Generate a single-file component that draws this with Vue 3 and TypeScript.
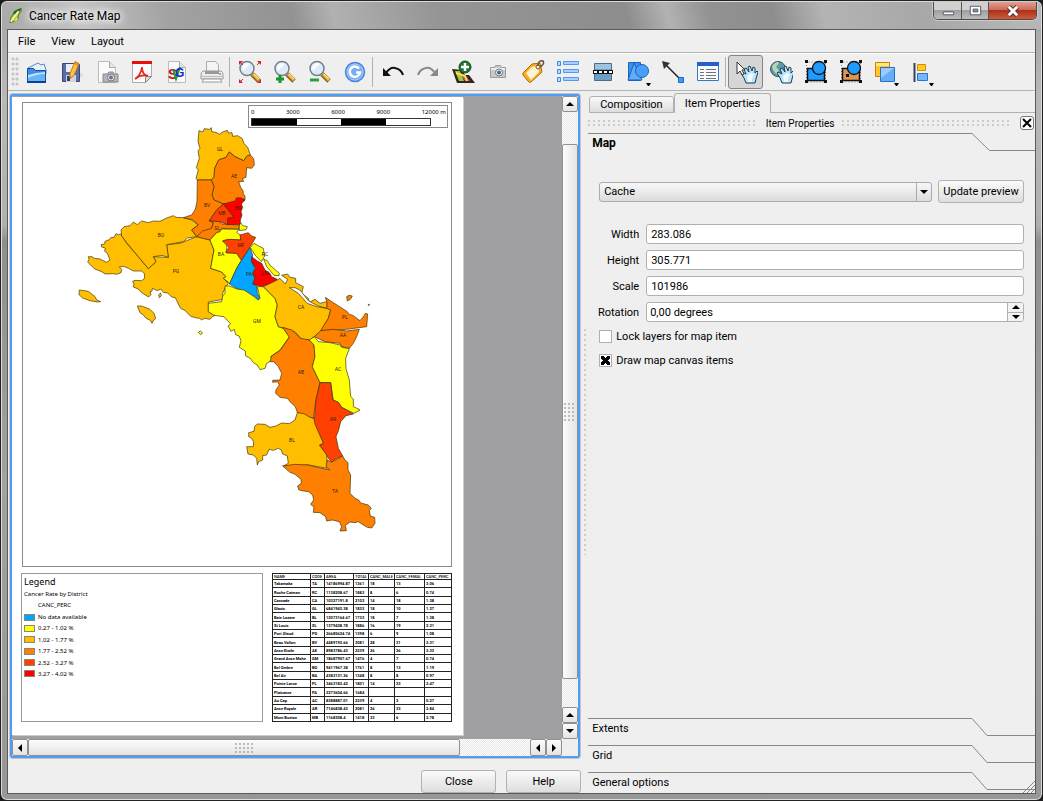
<script setup lang="ts">
import { ref } from 'vue'

interface Tool { name: string; art: string; pressed?: boolean; menu?: boolean }
interface Region { d: string; c: string }
interface Group { at: string; regions: Region[] }

const amber = '#ffbf00'
const orange = '#ff8000'
const ember = '#ff4000'
const red = '#ff0000'
const yellow = '#ffff00'
const blue = '#00a5ff'

const lens = '<path d="M14 14l7 7" stroke="#8a6a2a" stroke-width="5"/><path d="M15 14l6 6" stroke="#f5b73c" stroke-width="3"/><path d="M16 14l5 5" stroke="#ffe9a8"/><circle cx="9" cy="8.500" r="7" fill="#dcebf8" stroke="#75808c" stroke-width="1.500"/><path d="M4 8a5 5 0 0 1 8-4L5 11z" fill="#fff" opacity=".8"/>'
const hand = '<path d="M9 22l-2-5-3-5 1-1 4 2-2-5 2-1 3 4-1-5 2-1 2 5 1-4 2 1v5l2-2 1 1-2 7-1 4z" fill="#b9e3f8" stroke="#1f3d52"/><path d="M11 21l-1-6 4-3 3 1-2 5v3z" fill="#ecf9ff"/>'
const corners = '<path d="M2.500 2v20h19V2z" fill="none" stroke="#777" stroke-dasharray="1 2"/><path d="M1 0h3v3H1zM20 0h3v3h-3zM1 20h3v3H1zM20 20h3v3h-3z" fill="#111"/>'
const cam = '<path d="M4.500 7.500h4l1-2h5l1 2h4v10h-15z" fill="#c9c9c9" stroke="#9d9d9d"/><path d="M5 8h14v2H5z" fill="#eee"/><circle cx="13" cy="12.500" r="3.500" fill="#eef3fa" stroke="#777"/><circle cx="13" cy="12.500" r="2" fill="#46629a"/>'
const sheet = '<path d="M3.500 1.500h11l6 6v15h-17z" fill="#fafafa" stroke="#bbb"/><path d="M14.500 1.500v6h6" fill="#e4e4e4" stroke="#aaa"/>'

const toolGroups: Tool[][] = [
  [
    { name: 'Open template', art: '<path d="M3 8l10-5 3 2 3-1 2 6v4H3z" fill="#e8f2fd" stroke="#5885c0"/><path d="M2.500 8.500h6l2 2h10v12h-18z" fill="#3f8de0" stroke="#174da5"/><path d="M3 20v-5l8-2 9-1v9z" fill="#b7e1ff"/><path d="M3 18q9-4 17-4v7H3z" fill="#68b4f4"/><path d="M2 21h19v2H2z" fill="#0d3e9c"/>' },
    { name: 'Save template', art: '<path d="M18 11l6 4-6 4z" fill="#ddd"/><path d="M2.500 3.500h16l1 1v17h-17z" fill="#5b6ea8" stroke="#39477a"/><path d="M6 4h10v8H6z" fill="#e9edf5"/><path d="M6 15h10v7H6z" fill="#cfd3de"/><path d="M7 16h3v5H7z" fill="#30406f"/><path d="M15 1.500l4 2-5 12-4 3v-5z" fill="#ffc23d" stroke="#c37a10"/><path d="M15 2l4 2-1 2-4-2z" fill="#ed8b28"/>' },
    { name: 'Export as image', art: sheet + '<path d="M8 14h4l2-2h4l1 2h4v8H8z" fill="#b5b5b5" stroke="#898989"/><circle cx="16" cy="17.500" r="3.500" fill="#e2e6ee" stroke="#777"/><circle cx="16" cy="17.500" r="2" fill="#66758f"/>' },
    { name: 'Export as PDF', art: '<path d="M2.500 1.500h19v15l-6 6h-13z" fill="#fbfbfb" stroke="#aaa"/><path d="M2 1h20v3H2z" fill="#e80f0f"/><path d="M15.500 22.500v-6h6z" fill="#ddd" stroke="#888"/><path d="M5 19q6-4 7-12 0 8 6 9-7-2-13 3" fill="none" stroke="#e22b20" stroke-width="1.800"/>' },
    { name: 'Export as SVG', art: sheet + '<text x="3" y="19" font-size="14" font-weight="bold" fill="#e00016" font-family="Liberation Sans">S</text><path d="M8 9l3 10 4-12" stroke="#00b02a" stroke-width="2" fill="none"/><text x="10" y="17" font-size="12" font-weight="bold" fill="#1720d8" font-family="Liberation Sans">G</text>' },
    { name: 'Print', art: '<path d="M6.500 13V1.500h9l3 3V13z" fill="#f4f4f4" stroke="#aaa"/><path d="M3 11h18q2 1 2 4v4H1v-4q0-3 2-4z" fill="#ececec" stroke="#999"/><path d="M5 11h14v3H5z" fill="#999"/><path d="M2 16h20v1H2z" fill="#bbb"/><path d="M4 19h16l2 3H2z" fill="#fff" stroke="#999"/><circle cx="20" cy="14" r="1" fill="#5b5"/>' },
  ],
  [
    { name: 'Zoom full', art: lens + '<path d="M1 5V1h4zM23 5V1h-4zM1 19v4h4zM23 19v4h-4z" fill="#d8202c"/><path d="M1 1l4 4M23 1l-4 4M1 23l4-4" stroke="#d8202c"/>' },
    { name: 'Zoom in', art: lens + '<path d="M7 15v8M3 19h8" stroke="#1f9434" stroke-width="3"/>' },
    { name: 'Zoom out', art: lens + '<path d="M2 20h9" stroke="#2d9f3f" stroke-width="3"/>' },
    { name: 'Refresh view', art: '<circle cx="12" cy="12" r="9.500" fill="#79adf2" stroke="#4b84da" stroke-width="1.500"/><circle cx="12" cy="12" r="8" fill="none" stroke="#a9ccfa"/><path d="M16 8.500a5.200 5.200 0 1 0 1 4h-4" fill="none" stroke="#fff" stroke-width="2.500"/>' },
  ],
  [
    { name: 'Undo', art: '<path d="M5 13q4-6 9-5 6 1 8 7" fill="none" stroke="#111" stroke-width="2"/><path d="M2 8v8h8z" fill="#111"/>' },
    { name: 'Redo', art: '<path d="M19 13q-4-6-9-5-6 1-8 7" fill="none" stroke="#888" stroke-width="2"/><path d="M22 8v8h-8z" fill="#888"/>' },
    { name: 'Add new map', art: '<path d="M1 9l10 1 3 5 4 0 6 8H6z" fill="#33241c"/><path d="M4 11h5l4 10H8z" fill="#9dcb3c"/><path d="M8 12l6 9h5l-4-5z" fill="#d84a83"/><path d="M5 13l9 3 2 5" fill="none" stroke="#f4e548" stroke-width="2"/><circle cx="14" cy="7" r="6" fill="#1e7430" stroke="#145020"/><path d="M14 3v8M10 7h8" stroke="#fff" stroke-width="2.500"/>' },
    { name: 'Add image', art: cam },
    { name: 'Add label', art: '<path d="M11 4l8-1 2 9-11 10q-2 1-3-1l-5-6q-1-2 1-3z" fill="#ffae15" stroke="#ad6808"/><path d="M11 7l6-1 1 6-8 8-5-7z" fill="#fff4d7"/><circle cx="17" cy="7" r="2" fill="#eee" stroke="#79551f"/><path d="M17 6q0-6 5-5 2 3-3 6" fill="none" stroke="#63513d" stroke-width="1.500"/>' },
    { name: 'Add legend', art: '<path d="M1.500 1.500h3v4h-3zM1.500 9.500h3v4h-3zM1.500 17.500h3v4h-3z" fill="#bddcff" stroke="#3d85df"/><path d="M7.500 1.500h15v3h-15zM7.500 9.500h15v3h-15zM7.500 17.500h15v3h-15z" fill="#a8ceff" stroke="#5598eb"/>' },
    { name: 'Add scalebar', art: '<path d="M3.500 3.500h17v17h-17z" fill="#6b9fc6" stroke="#426e92"/><path d="M4 4h16v5H4z" fill="#9dc3df"/><path d="M2 10h20v4H2z" fill="#111"/><path d="M3 12h18" stroke="#fff" stroke-width="2" stroke-dasharray="3 2"/>' },
    { name: 'Add basic shape', menu: true, art: '<path d="M2.500 2.500h12v18h-12z" fill="#3990ed" stroke="#1765bf"/><path d="M8 3L2 20h14z" fill="#63adf7" stroke="#1765bf"/><circle cx="16" cy="11" r="6.500" fill="#49a0fa" stroke="#1765bf"/>' },
    { name: 'Add arrow', art: '<path d="M4 4l15 15" stroke="#222" stroke-width="1.500"/><path d="M1 1l8 2-6 6z" fill="#333"/><path d="M17.500 17.500h5v5h-5z" fill="#3b9cff" stroke="#1d69be"/>' },
    { name: 'Add attribute table', art: '<path d="M1.500 2.500h21v18h-21z" fill="#f8fbff" stroke="#3477cd"/><path d="M1 2h22v4H1z" fill="#2361c8"/><path d="M4 9.500h4M4 12.500h4M4 15.500h4M4 18.500h4M10 9.500h10M10 12.500h10M10 15.500h10M10 18.500h10" stroke="#6d737c"/>' },
  ],
  [
    { name: 'Select/Move item', pressed: true, art: '<g transform="translate(3 1)">' + hand + '</g><path d="M3 2v12l3-3 2 4 2-1-2-4h3z" fill="#fff" stroke="#333"/>' },
    { name: 'Move item content', art: '<circle cx="9" cy="9" r="7.500" fill="#5d99af" stroke="#38515c"/><path d="M3 6q5-6 7-3l-3 4 3 3-2 5-4-5z" fill="#b9d7ae"/><g transform="translate(4 1)">' + hand + '</g>' },
    { name: 'Group items', art: corners + '<path d="M3.500 8.500h17v12h-17z" fill="#1e9bff" stroke="#111" stroke-width="1.500"/><circle cx="15" cy="8" r="6.500" fill="#1e9bff" stroke="#111" stroke-width="1.300"/>' },
    { name: 'Ungroup items', art: corners + '<path d="M3.500 8.500h17v12h-17z" fill="#df9654" stroke="#111" stroke-width="1.500"/><circle cx="15" cy="8" r="6.500" fill="#1e9bff" stroke="#111" stroke-width="1.300"/><path d="M7 14h3v3H7z" fill="#111"/>' },
    { name: 'Raise selected items', menu: true, art: '<path d="M1.500 2.500h14v14h-14z" fill="#ffc52d" stroke="#cd8000"/><path d="M2 3h13v3H2z" fill="#ffe77b"/><path d="M6.500 7.500h14v14h-14z" fill="#66acf8" stroke="#2670c8"/><path d="M7 8h13L7 18z" fill="#9bcaff"/>' },
    { name: 'Align selected items', menu: true, art: '<path d="M5.500 3v19" stroke="#37405c" stroke-width="2"/><path d="M8.500 4.500h8v6h-8z" fill="#ffcb28" stroke="#dc8a00"/><path d="M8.500 13.500h10v7h-10z" fill="#76b6fc" stroke="#2476d3"/>' },
  ],
]

const groups: Group[] = [
  {
    at: 'translate(70 100) scale(.33333)',
    regions: [
      { c: amber, d: 'M153 402L146 404 138 401 132 412 122 413 118 419 105 424 104 432 93 434 95 441 106 444 104 454 112 460 120 480 110 487 90 477 73 475 66 470 55 470 57 478 53 486 62 495 74 507 95 515 105 522 130 521 140 523 153 518 155 508 148 501 160 499 176 505 190 513 215 513 223 521 224 535 215 542 195 541 188 544 192 552 190 561 204 567 218 580 236 591 243 584 240 575 246 573 247 565 262 572 272 567 280 577 293 579 305 591 316 593 325 612 332 625 346 632 362 649 380 654 389 655 395 660 404 655 420 658 427 650 435 646 415 635 415 606 460 598 458 580 465 565 475 550 460 535 468 530 455 516 422 505 432 450 420 420 380 410 330 430 290 434 295 472 250 470 258 485 235 506 205 470 170 430z' },
      { c: amber, d: 'M153 390L162 380 180 377 190 366 202 374 215 363 235 368 250 363 270 364 290 354 310 347 318 352 340 353 365 360 385 375 365 390 380 410 352 414 340 425 290 434 295 472 276 466 250 470 258 485 235 506 205 470 170 428 155 408z' },
      { c: amber, d: 'M387 92L398 96 403 86 418 88 424 83 425 95 438 97 448 103 458 96 472 91 475 99 486 98 488 109 503 107 516 115 522 130 533 142 541 165 530 170 521 182 495 170 478 156 468 172 446 180 434 205 432 232 424 240 382 240 378 235 385 210 379 203 388 175 384 153 390 145 384 125z' },
      { c: orange, d: 'M478 156L495 170 521 182 532 167 541 165 551 176 553 195 545 205 530 203 528 232 517 236 521 244 506 245 512 262 519 272 520 282 525 288 525 300 512 294 495 307 460 312 443 304 432 300 426 285 432 260 424 240 432 232 434 205 446 180 468 172z' },
      { c: orange, d: 'M382 240L424 240 432 260 426 285 432 300 460 312 440 330 418 362 430 368 425 385 410 395 380 410 365 390 385 375 370 360 340 353 365 345 376 328 381 305z' },
      { c: orange, d: 'M418 362L450 365 455 372 508 375 507 388 455 385 450 395 440 398 420 420 380 410 398 393 425 385 430 368z' },
      { c: yellow, d: 'M420 420L440 398 450 395 455 387 507 388 500 397 512 406 512 420 470 418 458 423 472 430 468 458 500 460 515 480 500 505 480 550 460 535 468 530 455 516 422 505 432 450z' },
      { c: yellow, d: 'M511 366L518 377 532 380 528 389 508 392 508 375z' },
      { c: ember, d: 'M460 312L492 352 474 354 472 374 450 365 418 362 440 330z' },
      { c: red, d: 'M460 312L495 303 500 293 512 294 525 300 514 312 518 322 513 335 516 345 511 360 510 373 472 374 474 354 492 352z' },
      { c: ember, d: 'M458 423L480 418 512 420 510 405 535 398 545 408 557 412 550 425 540 440 528 460 515 482 500 460 468 458 476 442z' },
      { c: blue, d: 'M540 443L548 465 545 485 555 505 548 520 555 535 548 550 560 558 562 580 572 598 562 600 555 588 542 590 530 582 478 552 500 505 515 480z' },
      { c: red, d: 'M545 470L562 483 575 490 585 510 600 520 605 530 622 538 605 550 575 560 548 552 555 535 548 520 557 505 545 485z' },
      { c: yellow, d: 'M541 442L552 430 566 438 580 445 584 468 574 485 555 465z' },
      { c: yellow, d: 'M581 477L592 482 600 496 612 506 628 520 627 527 612 526 590 500z' },
      { c: amber, d: 'M28 570L55 574 75 590 80 600 92 605 82 606 60 602 38 594 27 584z' },
      { c: amber, d: 'M202 618L215 618 240 628 252 640 257 656 251 660 246 670 240 660 228 655 220 645 210 638z' },
      { c: amber, d: 'M266 584L272 579 274 587 268 593z' },
      { c: yellow, d: 'M385 697L391 693 398 699 391 704z' },
    ],
  },
  {
    at: 'translate(200 190) scale(.33333)',
    regions: [
      { c: yellow, d: 'M88 288L110 297 132 300 155 315 175 330 180 325 172 290 190 290 225 325 232 345 225 380 235 410 250 415 268 440 240 480 212 500 218 510 200 520 195 535 180 539 172 525 160 518 150 504 137 498 136 483 118 472 123 452 117 438 107 434 103 418 93 424 84 408 92 402 72 380 42 376 25 365 25 340 65 335 68 318 75 310 75 288z' },
      { c: amber, d: 'M190 290L232 270 240 265 256 282 263 268 245 256 263 252 270 262 287 265 287 278 310 290 305 310 325 325 328 337 345 328 360 340 380 335 382 355 392 360 385 385 362 425 330 450 305 448 285 425 235 410 225 380 232 345 225 325z' },
      { c: '#fff', d: 'M268 293L285 293 300 300 325 332 352 347 380 355 350 350 322 340 295 310z' },
      { c: orange, d: 'M376 322L400 338 442 365 446 372 460 377 480 392 492 378 496 370 503 372 500 410 440 418 362 422 385 385 392 360 380 355 382 340z' },
      { c: orange, d: 'M362 422L400 418 440 423 478 418 470 440 460 460 448 475 425 470 420 460 375 455 343 440z' },
      { c: orange, d: 'M440 320L447 316 457 318 451 328 442 333z' },
      { c: orange, d: 'M505 343h3v3h-3z' },
    ],
  },
  {
    at: 'translate(230 320) scale(.33333)',
    regions: [
      { c: orange, d: 'M158 22L185 30 212 55 238 60 252 75 255 110 247 140 270 188 258 240 250 295 240 292 202 278 196 260 180 245 172 235 150 232 137 220 138 209 148 195 143 185 128 187 128 181 150 180 155 160 145 140 131 125 120 125 125 108 150 92 178 52z' },
      { c: yellow, d: 'M238 60L253 50 265 65 300 68 330 75 335 82 358 86 347 115 348 146 358 180 362 230 370 237 370 260 381 265 390 270 372 280 335 262 325 247 310 240 302 188 270 188 247 140 255 110 252 75z' },
      { c: ember, d: 'M270 188L302 188 308 240 325 247 335 262 370 282 348 287 332 305 326 330 318 350 325 385 338 408 320 415 305 427 288 405 268 375 280 372 270 345 252 310 258 240z' },
      { c: amber, d: 'M202 278L222 281 240 292 252 296 255 312 280 370 268 375 290 405 292 445 235 435 160 438 175 430 172 408 158 402 154 390 145 385 130 391 117 388 110 405 98 407 98 420 86 425 82 435 80 415 70 405 54 402 50 380 70 380 71 366 65 355 56 350 56 338 72 334 74 319 82 312 105 313 120 322 138 318 155 309 178 311 195 300z' },
      { c: orange, d: 'M158 438L195 433 235 435 262 442 300 450 288 440 292 420 305 427 338 408 345 420 354 428 354 450 362 465 360 520 375 535 386 540 392 549 415 555 424 565 418 571 421 588 434 592 435 610 425 624 412 622 400 615 385 605 375 608 360 606 346 616 349 632 330 633 335 620 328 605 307 600 290 603 287 590 270 578 250 577 252 561 242 553 251 540 248 525 236 515 215 512 206 509 203 498 214 490 213 478 195 463 180 457z' },
    ],
  },
]

const mapLabels: [string, number, number][] = [
  ['GL', 220, 151], ['AE', 234, 178], ['BV', 207, 207], ['ER', 238, 210], ['MB', 222, 215], ['SL', 217, 230],
  ['BO', 161, 237], ['MF', 241, 247], ['BA', 221, 256], ['RC', 265, 256], ['PA', 249, 276], ['LM', 265, 275],
  ['PG', 176, 273], ['CA', 301, 309], ['GM', 257, 323], ['PL', 345, 319], ['AA', 343, 337], ['AC', 338, 371],
  ['AB', 301, 374], ['AR', 333, 421], ['BL', 292, 442], ['TA', 335, 493],
]

const ticks = ['0', '3000', '6000', '9000', '12000 m']

const legend = [
  { c: blue, t: 'No data available' },
  { c: yellow, t: '0.27 - 1.02 %' },
  { c: amber, t: '1.02 - 1.77 %' },
  { c: orange, t: '1.77 - 2.52 %' },
  { c: ember, t: '2.52 - 3.27 %' },
  { c: red, t: '3.27 - 4.02 %' },
]

const columns = ['NAME', 'CODE', 'AREA', 'TOTAL', 'CANC_MALE', 'CANC_FEMAL', 'CANC_PERC']
const rows = [
  ['Takamaka', 'TA', '14186994.87', '1361', '18', '13', '3.06'],
  ['Roche Caiman', 'RC', '1138208.67', '1883', '8', '6', '0.74'],
  ['Cascade', 'CA', '10327191.8', '2103', '14', '18', '1.38'],
  ['Glacis', 'GL', '6841943.38', '1833', '18', '10', '1.37'],
  ['Baie Lazare', 'BL', '12073164.67', '1733', '18', '7', '1.38'],
  ['St Louis', 'SL', '1379428.78', '1886', '16', '19', '2.31'],
  ['Port Glaud', 'PG', '26685624.74', '1398', '6', '9', '1.08'],
  ['Beau Vallon', 'BV', '4489193.66', '3081', '28', '31', '2.31'],
  ['Anse Etoile', 'AE', '8983786.43', '2239', '26', '26', '2.33'],
  ['Grand Anse Mahe', 'GM', '18687907.67', '1476', '4', '7', '0.74'],
  ['Bel Ombre', 'BO', '9411967.38', '1761', '8', '13', '1.19'],
  ['Bel Air', 'BA', '4383131.26', '1348', '8', '8', '0.97'],
  ['Pointe Larue', 'PL', '3463183.42', '1801', '14', '23', '2.47'],
  ['Plaisance', 'PA', '2273604.66', '1684', '', '', ''],
  ['Au Cap', 'AC', '8388887.01', '2239', '4', '2', '0.27'],
  ['Anse Royale', 'AR', '7146838.43', '2081', '26', '33', '2.84'],
  ['Mont Buxton', 'MB', '1168308.4', '1418', '33', '6', '2.78'],
]

const cache = ref('Cache')
const fields = ref([
  { id: 'w', label: 'Width', value: '283.086' },
  { id: 'h', label: 'Height', value: '305.771' },
  { id: 's', label: 'Scale', value: '101986' },
])
const rotation = ref('0,00 degrees')
const lockLayers = ref(false)
const drawItems = ref(true)
</script>

<template>
  <div class="window">
    <header class="titlebar">
      <svg class="app" viewBox="0 0 16 18"><path d="M1 17Q2 5 14 1q1 3-3 7l-1 6-5 2z" fill="#b5c92c" stroke="#4d6f16" /><path d="M5 5q4-4 9-4l-2 4-7 3z" fill="#236c1c" /><path d="M2 16L11 4" stroke="#f4f6b6" stroke-width="2" /><path d="M6 16l3-5 1 3" fill="#eee29a" /></svg>
      <h1>Cancer Rate Map</h1>
      <div class="caption">
        <button class="min" aria-label="Minimize"><svg viewBox="0 0 28 18"><path d="M9.500 10.500h11v3h-11z" fill="#fff" stroke="#535666" /></svg></button>
        <button class="max" aria-label="Maximize"><svg viewBox="0 0 27 18"><path d="M8.500 4.500h11v9h-11z" fill="#fff" stroke="#535666" /><path d="M11.500 7.500h5v3h-5z" fill="#999" stroke="#535666" /></svg></button>
        <button class="shut" aria-label="Close window"><svg viewBox="0 0 46 18"><path d="M19 5l9 9M28 5l-9 9" stroke="#573030" stroke-width="5" /><path d="M19 5l9 9M28 5l-9 9" stroke="#fff" stroke-width="3" /></svg></button>
      </div>
    </header>

    <div class="client">
      <nav class="menubar">
        <button>File</button><button>View</button><button>Layout</button>
      </nav>

      <div class="toolbar" role="toolbar">
        <span class="grip" />
        <template v-for="(g, gi) in toolGroups" :key="gi">
          <span v-if="gi" class="sep" />
          <button v-for="t in g" :key="t.name" class="tool" :class="{ pressed: t.pressed }" :aria-label="t.name">
            <svg viewBox="0 0 24 24" fill="none" v-html="t.art" />
            <svg v-if="t.menu" class="drop" viewBox="0 0 5 3"><path d="M0 0h5L3 3H2z" fill="#000" /></svg>
          </button>
        </template>
      </div>

      <main class="body">
        <section class="left">
          <div class="view">
            <div class="stage">
              <div class="paper">
                <div class="mapframe">
                  <svg viewBox="23 103 428 463" class="map">
                    <g v-for="g in groups" :key="g.at" :transform="g.at" stroke="#3d3000" stroke-width="2" stroke-linejoin="round">
                      <path v-for="(r, i) in g.regions" :key="i" :d="r.d" :fill="r.c" />
                    </g>
                    <text v-for="l in mapLabels" :key="l[0]" :x="l[1]" :y="l[2]" text-anchor="middle">{{ l[0] }}</text>
                  </svg>
                  <div class="scalebar">
                    <div class="ticks"><span v-for="t in ticks" :key="t">{{ t }}</span></div>
                    <div class="bar"><i /><b /><i /><b /></div>
                  </div>
                </div>
                <div class="lower">
                  <div class="legend">
                    <h2>Legend</h2>
                    <p>Cancer Rate by District</p>
                    <p class="sub">CANC_PERC</p>
                    <ul>
                      <li v-for="l in legend" :key="l.t"><span class="swatch" :style="{ background: l.c }" />{{ l.t }}</li>
                    </ul>
                  </div>
                  <table class="attrs">
                    <colgroup><col class="c1"><col class="c2"><col class="c3"><col class="c4"><col class="c5"><col class="c6"><col class="c7"></colgroup>
                    <thead><tr><th v-for="c in columns" :key="c">{{ c }}</th></tr></thead>
                    <tbody>
                      <tr v-for="r in rows" :key="r[1]"><td v-for="(c, i) in r" :key="i">{{ c }}</td></tr>
                    </tbody>
                  </table>
                </div>
              </div>
            </div>
            <div class="vscroll">
              <button aria-label="Scroll up"><svg viewBox="0 0 8 4"><path d="M0 4l4-4 4 4z" /></svg></button>
              <div class="gap1" />
              <div class="thumb"><span class="dots" /></div>
              <div class="track" />
              <button aria-label="Page up"><svg viewBox="0 0 8 4"><path d="M0 4l4-4 4 4z" /></svg></button>
              <button aria-label="Scroll down"><svg viewBox="0 0 8 4"><path d="M0 0l4 4 4-4z" /></svg></button>
            </div>
            <div class="hscroll">
              <button aria-label="Scroll left"><svg viewBox="0 0 4 8"><path d="M4 0L0 4l4 4z" /></svg></button>
              <div class="thumb"><span class="dots" /></div>
              <div class="track" />
              <button aria-label="Page left"><svg viewBox="0 0 4 8"><path d="M4 0L0 4l4 4z" /></svg></button>
              <button aria-label="Scroll right"><svg viewBox="0 0 4 8"><path d="M0 0l4 4-4 4z" /></svg></button>
            </div>
          </div>
          <footer class="actions">
            <button class="push">Close</button>
            <button class="push">Help</button>
          </footer>
        </section>

        <div class="splitter"><span /></div>

        <section class="right">
          <div class="tabs" role="tablist">
            <button role="tab" class="tab">Composition</button>
            <button role="tab" class="tab active" aria-selected="true">Item Properties</button>
            <span class="rest" />
          </div>
          <div class="dock">
            <span class="stipple" />
            <span class="docktitle">Item Properties</span>
            <span class="stipple" />
            <button aria-label="Close panel"><svg viewBox="0 0 12 12"><path d="M2 2l8 8M10 2l-8 8" stroke="#000" stroke-width="2" /></svg></button>
          </div>
          <button class="fold open"><span class="flap">Map</span><svg viewBox="0 0 18 18"><path d="M0 .5L17.500 17.500H18" fill="none" stroke="#888" /></svg><i /></button>
          <form class="form" @submit.prevent>
            <div class="row">
              <div class="combo">
                <select v-model="cache" aria-label="Preview mode"><option>Cache</option><option>Render</option><option>Rectangle</option></select>
                <svg viewBox="0 0 8 4"><path d="M0 0h8L4 4z" /></svg>
              </div>
              <button type="button" class="push update">Update preview</button>
            </div>
            <div class="grid">
              <template v-for="f in fields" :key="f.id">
                <label :for="f.id">{{ f.label }}</label>
                <input :id="f.id" v-model="f.value" type="text">
              </template>
              <label for="rot">Rotation</label>
              <div class="spin">
                <input id="rot" v-model="rotation" type="text">
                <div class="steps">
                  <button type="button" aria-label="Increase"><svg viewBox="0 0 8 4"><path d="M0 4l4-4 4 4z" /></svg></button>
                  <button type="button" aria-label="Decrease"><svg viewBox="0 0 8 4"><path d="M0 0h8L4 4z" /></svg></button>
                </div>
              </div>
            </div>
            <label class="check"><input v-model="lockLayers" type="checkbox">Lock layers for map item</label>
            <label class="check"><input v-model="drawItems" type="checkbox">Draw map canvas items</label>
          </form>
          <button v-for="n in ['Extents', 'Grid', 'General options']" :key="n" class="fold"><span class="flap">{{ n }}</span><svg viewBox="0 0 18 18"><path d="M0 .5L15 17.500H18" fill="none" stroke="#888" /></svg><i /></button>
          <svg class="sizegrip" viewBox="0 0 12 12"><path d="M0 12L12 0M4 12l8-8M8 12l4-4" stroke="#888" /></svg>
        </section>
      </main>
    </div>
  </div>
</template>

<style>
html, body { margin: 0; background: #1d1d1f; }
</style>

<style scoped>
* { box-sizing: border-box; }
.window {
  display: flex;
  flex-direction: column;
  min-height: 100vh;
  padding: 0 6px 6px 6px;
  border: 1px solid #222;
  border-radius: 7px;
  background: linear-gradient(#a4a4a4, #b8b8b8 12%, #b0b0b0 28%, #8f8f8f 30%, #a2a2a2 60%, #979797);
  box-shadow: inset 0 0 0 1px #dcdcdc;
  font-family: Roboto, "Noto Sans", sans-serif;
  font-size: 11px;
  line-height: 15px;
  color: #000;
}
button, input, select { font: inherit; color: inherit; margin: 0; padding: 0; }
button { background: none; border: 0; }
.titlebar {
  display: flex;
  align-items: center;
  height: 27px;
  margin: 1px -5px 0;
  padding-left: 7px;
  border-radius: 6px 6px 0 0;
  background: linear-gradient(75deg, #a9a9a9 0, #c4c4c4 8%, #a3a3a3 16%, #929292 28%, #b1b1b1 32%, #959595 42%, #8d8d8d 60%, #b2b2b2 64%, #929292 68%, #8d8d8d 74%, #b4b4b4 79%, #a8a8a8 88%, #b8b8b8);
}
.app { width: 14px; height: 17px; }
h1 {
  flex: 1;
  margin: 0;
  padding-left: 6px;
  font-size: 12px;
  line-height: 16px;
  font-weight: 400;
  text-shadow: 0 0 6px #fff, 0 0 8px #fff, 0 0 10px #fff;
}
.caption { display: flex; align-self: flex-start; height: 18px; margin-right: 4px; border: 1px solid #4b4b4b; border-top: 0; border-radius: 0 0 5px 5px; overflow: hidden; box-shadow: 0 0 0 1px #ccc; }
.caption button { width: 28px; border-right: 1px solid #555; background: linear-gradient(#d0d0d0 45%, #a0a0a0 50%, #bcbcbc); }
.caption .max { width: 27px; }
.caption .shut { width: 47px; border: 0; background: linear-gradient(#e0a191, #cf6b57 45%, #ad3019 50%, #cf5b3b); }
.caption svg { display: block; width: 100%; height: 17px; }
.client { flex: 1; display: flex; flex-direction: column; border: 1px solid #5a5a5a; background: #efefef; }
.menubar { display: flex; align-items: center; height: 23px; padding-left: 2px; border-bottom: 1px solid #b4b4b4; }
.menubar button { padding: 0 8px; }
.toolbar { display: flex; align-items: center; height: 38px; padding-left: 3px; border-top: 1px solid #fff; border-bottom: 1px solid #b4b4b4; }
.grip { width: 8px; height: 30px; background: radial-gradient(circle at 2px 2px, #c6c6c6 1px, transparent 2px) 0 0 / 4px 5px; }
.sep { width: 3px; height: 30px; border-left: 1px solid #b0b0b0; }
.tool { position: relative; display: flex; align-items: center; justify-content: center; width: 35px; height: 34px; }
.tool svg { width: 24px; height: 24px; }
.tool .drop { position: absolute; right: 4px; bottom: 3px; width: 5px; height: 3px; }
.tool.pressed { border: 1px solid #858585; border-radius: 3px; background: #d6d6d6; }
.body { flex: 1; display: flex; }
.left { flex: 574 1 0; display: flex; flex-direction: column; min-width: 0; padding: 3px 3px 0 2px; }
.view {
  flex: 1;
  display: grid;
  grid-template: minmax(0, 1fr) 17px / minmax(0, 1fr) 16px;
  margin-right: 1px;
  border: 2px solid #4d9df5;
  border-radius: 2px;
  outline: 1px solid #c4c4c4;
  background: #efefef;
}
.stage { background: #a0a0a4; overflow: hidden; padding-top: 1px; }
.paper { width: 451px; padding: 5px 11px 13px 10px; background: #fff; box-shadow: 1px 1px 0 #ccc; }
.mapframe { position: relative; height: 465px; border: 1px solid #8a8a8a; }
.map { display: block; width: 100%; height: 100%; }
.map text { font-size: 5px; fill: #33260a; }
.scalebar { position: absolute; top: 2px; right: 3px; width: 200px; height: 23px; padding: 2px 0 0 2px; border: 1px solid #8a8a8a; background: #fff; }
.ticks { display: flex; justify-content: space-between; height: 10px; font: 6px/8px "Noto Sans", sans-serif; padding-right: 1px; }
.bar { display: flex; width: 180px; height: 8px; border: 1px solid #333; }
.bar i, .bar b { flex: 1; }
.bar i { background: #000; }
.lower { display: flex; justify-content: space-between; margin: 6px 0 0 -1px; }
.legend { width: 242px; height: 149px; padding: 1px 2px; border: 1px solid #999; font: 6px/8px "Noto Sans", sans-serif; }
.legend h2 { margin: 0 0 2px; font: 9px/13px "Noto Sans", sans-serif; }
.legend p { margin: 0 0 3px; }
.legend .sub { padding-left: 14px; margin-bottom: 4px; }
.legend ul { display: flex; flex-direction: column; justify-content: space-between; height: 65px; margin: 0; padding: 0; list-style: none; }
.legend li { display: flex; align-items: center; height: 8px; }
.swatch { width: 11px; height: 7px; margin-right: 3px; border: 1px solid #887; }
.attrs { width: 180px; height: 149px; table-layout: fixed; border-collapse: collapse; font: 4px/5px Roboto, sans-serif; }
.attrs th, .attrs td { padding: 0 0 0 1px; border: 1px solid #222; text-align: left; font-weight: 700; white-space: nowrap; }
.attrs th { font-weight: 500; }
.c1 { width: 38px; } .c2 { width: 14px; } .c3 { width: 29px; } .c4 { width: 15px; } .c5 { width: 26px; } .c6 { width: 30px; }
.vscroll { display: flex; flex-direction: column; }
.hscroll { display: flex; grid-row: 2; }
.vscroll button, .hscroll button, .thumb { display: flex; align-items: center; justify-content: center; border: 1px solid #909090; border-radius: 2px; background: linear-gradient(#fcfcfc, #e4e4e4); }
.vscroll button { height: 16px; }
.hscroll button { width: 16px; }
.vscroll svg { width: 8px; height: 4px; }
.hscroll svg { width: 4px; height: 8px; }
.gap1, .track { background: repeating-conic-gradient(#fff 0 25%, #e6e6e6 0 50%) 0 0 / 2px 2px; }
.gap1 { flex: 32; }
.vscroll .thumb { flex: 534; background: linear-gradient(90deg, #fcfcfc, #e4e4e4); }
.vscroll .track { flex: 28; }
.hscroll .thumb { flex: 431; }
.hscroll .track { flex: 70; }
.dots { width: 18px; height: 10px; background: radial-gradient(circle at 1px 1px, #bbb 1px, transparent 1px) 0 0 / 4px 4px; }
.vscroll .dots { width: 12px; height: 18px; }
.actions { display: flex; justify-content: flex-end; gap: 10px; height: 35px; padding-top: 12px; }
.push { width: 75px; height: 23px; border: 1px solid #b2b2b2; border-radius: 3px; background: linear-gradient(#fafafa, #dedede); }
.splitter { display: flex; align-items: center; width: 4px; }
.splitter span { width: 3px; height: 226px; background: radial-gradient(circle at 1px 1px, #ccc 1px, transparent 1px) 0 0 / 4px 5px; }
.right { position: relative; flex: 449 1 0; display: flex; flex-direction: column; min-width: 0; }
.tabs { display: flex; align-items: flex-end; height: 22px; padding: 2px 0 0 1px; }
.tab { height: 17px; padding: 0 10px; border: 1px solid #b0b0b0; border-radius: 3px 3px 0 0; background: linear-gradient(#fafafa, #dcdcdc); }
.tab.active { height: 20px; border-bottom: 0; background: #efefef; }
.rest { flex: 1; border-bottom: 1px solid #b0b0b0; }
.dock { display: flex; align-items: center; gap: 8px; height: 20px; padding: 0 1px 0 0; }
.stipple { flex: 1; height: 7px; background: radial-gradient(circle at 1px 1px, #ccc 1px, transparent 1px) 0 0 / 5px 4px; }
.docktitle { font-size: 10px; }
.dock button { display: flex; width: 14px; height: 14px; border: 1px solid #777; border-radius: 3px; background: #fff; }
.fold { display: flex; height: 27px; text-align: left; }
.fold:nth-last-of-type(1) { height: 21px; }
.fold .flap { flex: 1; padding: 2px 4px 0; border-top: 1px solid #888; }
.fold svg { width: 18px; height: 18px; }
.fold i { width: 45px; height: 18px; border-bottom: 1px solid #888; }
.open .flap { font-weight: 700; font-size: 12px; }
.form { flex: 1; padding: 20px 11px 0; }
.row { display: flex; align-items: center; gap: 6px; height: 23px; }
.combo { position: relative; flex: 1; height: 20px; }
.combo select { width: 100%; height: 20px; padding-left: 4px; appearance: none; border: 1px solid #aaa; border-radius: 3px; background: linear-gradient(#f8f8f8, #dcdcdc); }
.combo svg { position: absolute; right: 1px; top: 1px; width: 15px; height: 18px; padding: 0 3px; border-left: 1px solid #aaa; box-sizing: border-box; pointer-events: none; }
.update { width: 86px; white-space: nowrap; }
.grid { display: grid; grid-template-columns: 40px minmax(0, 1fr); gap: 6px 7px; margin: 21px 0 2px; align-items: center; }
.grid label { justify-self: end; white-space: nowrap; }
.grid input { width: 100%; height: 20px; padding: 0 4px; border: 1px solid #b0b0b0; border-radius: 3px; background: #fff; }
.spin { display: flex; height: 20px; border: 1px solid #b0b0b0; border-radius: 3px; background: #fff; overflow: hidden; }
.spin input { flex: 1; height: 18px; padding: 0 3px; border: 0; }
.steps { display: flex; flex-direction: column; width: 16px; border-left: 1px solid #b0b0b0; background: #f2f2f2; }
.steps button { flex: 1; display: flex; align-items: center; justify-content: center; }
.steps button + button { border-top: 1px solid #b0b0b0; }
.steps svg { width: 8px; height: 4px; }
.check { display: flex; align-items: center; height: 24px; }
.check input { appearance: none; width: 13px; height: 13px; margin-right: 4px; border: 1px solid #b0b0b0; background: #fff; }
.check input:checked { background: linear-gradient(45deg, transparent 34%, #000 34% 66%, transparent 66%) 1px 1px / 9px 9px no-repeat, linear-gradient(-45deg, transparent 34%, #000 34% 66%, transparent 66%) 1px 1px / 9px 9px no-repeat, #fff; }
.sizegrip { position: absolute; right: 0; bottom: 0; width: 12px; height: 12px; }
</style>
